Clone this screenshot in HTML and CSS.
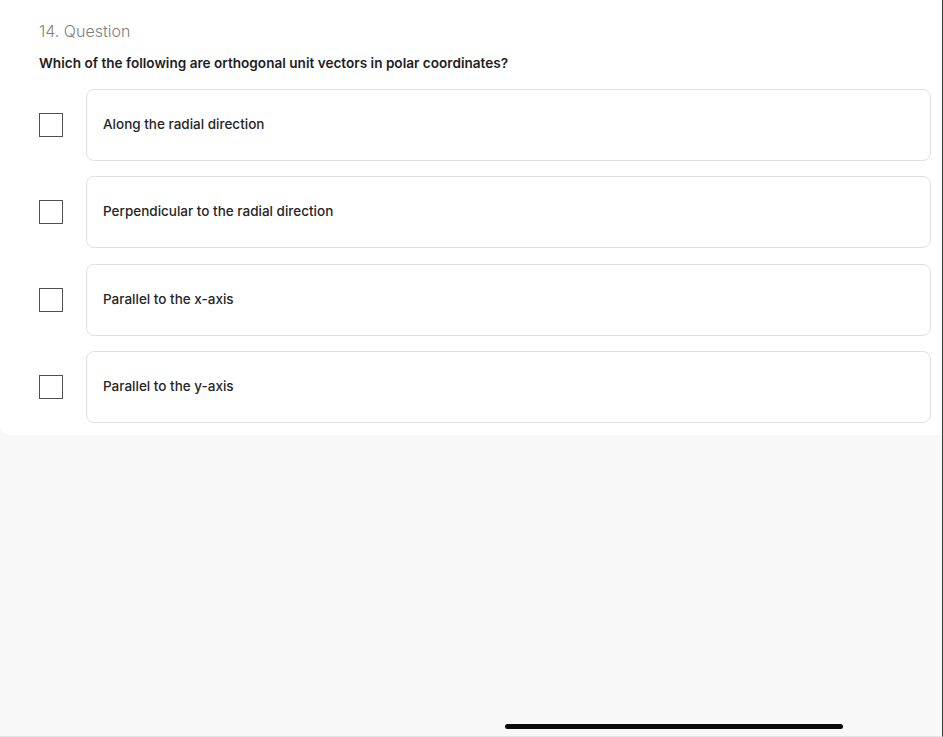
FILE: index.html
```html
<!DOCTYPE html>
<html lang="en">
<head>
<meta charset="utf-8">
<title>Question 14</title>
<link rel="stylesheet" href="styles.css">
</head>
<body>
<div class="screen">
  <section class="panel">
    <div class="label">14. Question</div>
    <div class="prompt">Which of the following are orthogonal unit vectors in polar coordinates?</div>
    <div class="options">
      <div class="option"><span class="check"></span><div class="card">Along the radial direction</div></div>
      <div class="option"><span class="check"></span><div class="card">Perpendicular to the radial direction</div></div>
      <div class="option"><span class="check"></span><div class="card">Parallel to the x-axis</div></div>
      <div class="option"><span class="check"></span><div class="card">Parallel to the y-axis</div></div>
    </div>
  </section>
  <div class="spacer"></div>
  <div class="home-bar"></div>
</div>
</body>
</html>
```
FILE: styles.css
```css
* { box-sizing: border-box; }
html, body { margin: 0; padding: 0; }
body {
  background: #f8f8f8;
  font-family: Inter, "Noto Sans", "Liberation Sans", sans-serif;
}
.screen {
  width: 943px;
  height: 737px;
  display: flex;
  flex-direction: column;
  border-right: 1px solid #3a3a3a;
  border-bottom: 1px solid #e4e4e4;
  background: #f8f8f8;
}
.panel {
  background: #fff;
  border-bottom-left-radius: 10px;
  padding: 20px 11px 12px 39px;
}
.label {
  font-size: 16px;
  line-height: 22px;
  font-weight: 300;
  color: #808080;
}
.prompt {
  margin-top: 11px;
  font-size: 13.6px;
  line-height: 20px;
  font-weight: 600;
  color: #1e1e1e;
}
.options {
  margin-top: 16px;
  display: flex;
  flex-direction: column;
  gap: 15.33px;
}
.option {
  display: flex;
  align-items: center;
  gap: 23px;
}
.check {
  flex: none;
  width: 24px;
  height: 24px;
  border: 1.5px solid #505050;
  background: #fff;
}
.card {
  flex: 1;
  height: 72px;
  display: flex;
  align-items: center;
  padding: 0 0 2px 16px;
  border: 1px solid #e0e0e0;
  border-radius: 8px;
  font-size: 13.5px;
  font-weight: 500;
  color: #262626;
}
.spacer { flex: 1; }
.home-bar {
  align-self: flex-start;
  margin-left: 505px;
  margin-bottom: 7px;
  width: 338px;
  height: 5px;
  border-radius: 3px;
  background: #0a0a0a;
}
```
